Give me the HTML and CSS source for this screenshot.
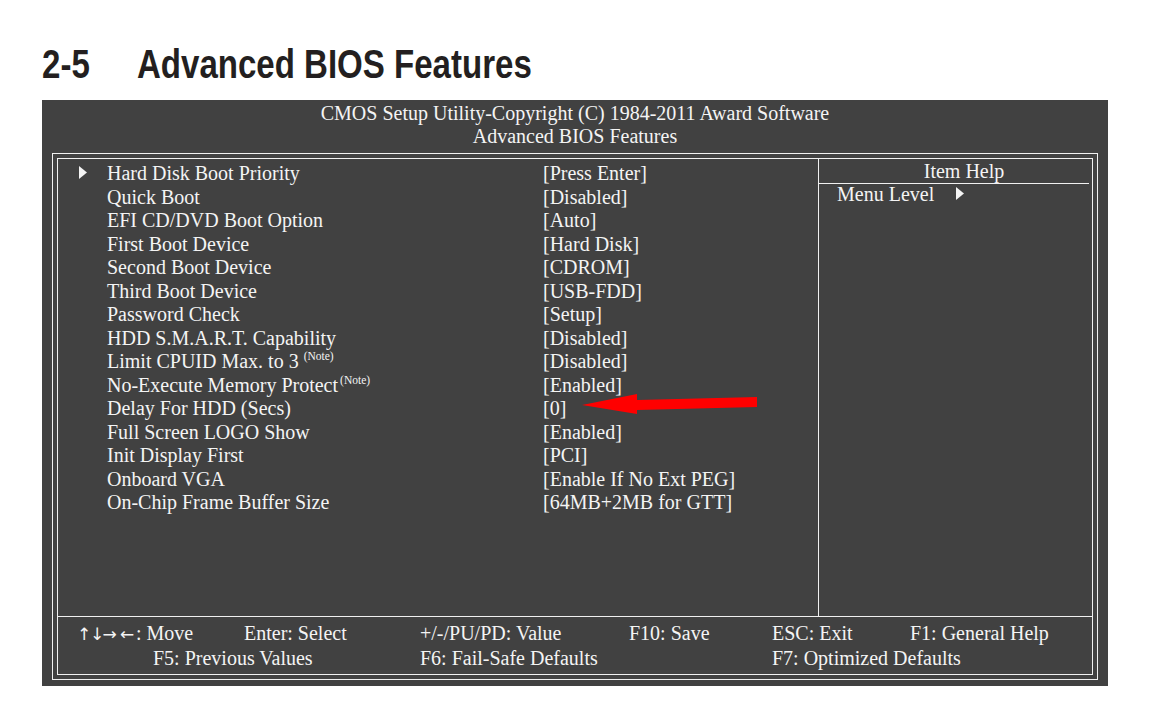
FILE: index.html
```html
<!DOCTYPE html>
<html lang="en">
<head>
    <meta charset="UTF-8">
    <meta name="viewport" content="width=device-width, initial-scale=1.0">
    <title>Advanced BIOS Features</title>
    <link rel="stylesheet" href="styles.css">
</head>
<body>

<h1 class="page-title"><span class="title-text"><span class="sec-num">2-5</span>Advanced BIOS Features</span></h1>

<div class="bios">
    <div class="bios-head">
        <div>CMOS Setup Utility-Copyright (C) 1984-2011 Award Software</div>
        <div>Advanced BIOS Features</div>
    </div>

    <div class="frame">
        <div class="frame-inner">
            <div class="main">
                <div class="items">
                    <div class="item">
                        <span class="mark"><svg width="8" height="13" viewBox="0 0 8 13"><polygon points="0,0 8,6.5 0,13" fill="#f4f4f4"/></svg></span>
                        <span>Hard Disk Boot Priority</span>
                        <span>[Press Enter]</span>
                    </div>
                    <div class="item"><span class="mark"></span><span>Quick Boot</span><span>[Disabled]</span></div>
                    <div class="item"><span class="mark"></span><span>EFI CD/DVD Boot Option</span><span>[Auto]</span></div>
                    <div class="item"><span class="mark"></span><span>First Boot Device</span><span>[Hard Disk]</span></div>
                    <div class="item"><span class="mark"></span><span>Second Boot Device</span><span>[CDROM]</span></div>
                    <div class="item"><span class="mark"></span><span>Third Boot Device</span><span>[USB-FDD]</span></div>
                    <div class="item"><span class="mark"></span><span>Password Check</span><span>[Setup]</span></div>
                    <div class="item"><span class="mark"></span><span>HDD S.M.A.R.T. Capability</span><span>[Disabled]</span></div>
                    <div class="item"><span class="mark"></span><span>Limit CPUID Max. to 3 <sup class="note">(Note)</sup></span><span>[Disabled]</span></div>
                    <div class="item"><span class="mark"></span><span>No-Execute Memory Protect<sup class="note tight">(Note)</sup></span><span>[Enabled]</span></div>
                    <div class="item"><span class="mark"></span><span>Delay For HDD (Secs)</span><span>[0]</span></div>
                    <div class="item"><span class="mark"></span><span>Full Screen LOGO Show</span><span>[Enabled]</span></div>
                    <div class="item"><span class="mark"></span><span>Init Display First</span><span>[PCI]</span></div>
                    <div class="item"><span class="mark"></span><span>Onboard VGA</span><span>[Enable If No Ext PEG]</span></div>
                    <div class="item"><span class="mark"></span><span>On-Chip Frame Buffer Size</span><span>[64MB+2MB for GTT]</span></div>
                </div>

                <div class="help">
                    <div class="help-title">Item Help</div>
                    <div class="help-level">Menu Level<svg width="8" height="13" viewBox="0 0 8 13"><polygon points="0,0 8,6.5 0,13" fill="#f4f4f4"/></svg></div>
                </div>
            </div>

            <div class="keys">
                <span class="k-move"><span class="arr a-up">↑</span><span class="arr a-down">↓</span><span class="arr a-right">→</span><span class="arr a-left">←</span>: Move</span>
                <span class="k-select">Enter: Select</span>
                <span class="k-value">+/-/PU/PD: Value</span>
                <span class="k-save">F10: Save</span>
                <span class="k-exit">ESC: Exit</span>
                <span class="k-help">F1: General Help</span>
                <span class="k-prev">F5: Previous Values</span>
                <span class="k-fail">F6: Fail-Safe Defaults</span>
                <span class="k-opt">F7: Optimized Defaults</span>
            </div>
        </div>
    </div>
</div>

<!-- red callout arrow pasted over the screenshot -->
<svg class="callout" width="180" height="26" viewBox="0 0 180 26">
    <polygon points="2,15 57,4 57,10 177,7 177,17 57,20 57,24" fill="#ff0000"/>
</svg>

</body>
</html>
```

FILE: styles.css
```css
body {
    margin: 0;
    background-color: #ffffff;
    position: relative;
}
.page-title {
    margin: 0;
    padding: 40px 0 0 42px;
    height: 48px;
    font-family: "Liberation Sans", Arial, sans-serif;
    font-size: 40px;
    line-height: 48px;
    font-weight: bold;
    color: #231f20;
    white-space: nowrap;
}
/* no narrow face installed, so squeeze the regular bold */
.title-text {
    display: inline-block;
    transform: scaleX(0.826);
    transform-origin: 0 50%;
}
.sec-num {
    display: inline-block;
    width: 115px;
}
.bios {
    margin: 12px 0 0 42px;
    width: 1066px;
    height: 586px;
    box-sizing: border-box;
    padding: 2px 10px 6px;
    background-color: #414141;
    color: #f4f4f4;
    font-family: "Liberation Serif", "Times New Roman", serif;
    font-size: 20px;
    display: flex;
    flex-direction: column;
}
.bios-head {
    text-align: center;
    line-height: 23px;
}
.frame {
    margin-top: 5px;
    flex: 1;
    border: 1px solid #f0f0f0;
    padding: 4px;
    display: flex;
}
.frame-inner {
    flex: 1;
    border: 1px solid #f0f0f0;
    display: flex;
    flex-direction: column;
}
.main {
    height: 458px;
    box-sizing: border-box;
    border-bottom: 1px solid #f0f0f0;
    display: grid;
    grid-template-columns: 761px 1fr;
}
.items {
    border-right: 1px solid #f0f0f0;
    padding: 3px 0 0 21px;
}
.item {
    display: grid;
    grid-template-columns: 28px 436px 1fr;
    line-height: 23.5px;
    white-space: nowrap;
}
.mark svg {
    vertical-align: 1px;
}
.note {
    font-size: 11.5px;
    line-height: 0;
    vertical-align: 8px;
}
.note.tight {
    margin-left: 2px;
}
.help-title {
    margin-right: 3px;
    padding: 1px 0 0 20px;
    line-height: 23px;
    text-align: center;
    border-bottom: 1px solid #f0f0f0;
}
.help-level {
    padding-left: 18px;
    line-height: 21px;
}
.help-level svg {
    margin-left: 22px;
    vertical-align: 1px;
}
.keys {
    padding: 4px 0 0 19px;
    display: grid;
    grid-template-columns: 76px 91px 176px 209px 143px 138px 1fr;
    line-height: 24px;
    white-space: nowrap;
}
.arr {
    display: inline-block;
    font-family: "DejaVu Sans", sans-serif;
    font-size: 17px;
    text-align: center;
}
.a-up { width: 13px; }
.a-down { width: 11px; }
.a-right { width: 17px; }
.a-left { width: 18px; }
.k-move { grid-column: 1 / 3; }
.k-select { grid-column: 3; }
.k-value { grid-column: 4; }
.k-save { grid-column: 5; }
.k-exit { grid-column: 6; }
.k-help { grid-column: 7; }
.k-prev { grid-column: 2 / 4; }
.k-fail { grid-column: 4 / 6; }
.k-opt { grid-column: 6 / 8; }
.callout {
    position: absolute;
    left: 580px;
    top: 390px;
}
```
